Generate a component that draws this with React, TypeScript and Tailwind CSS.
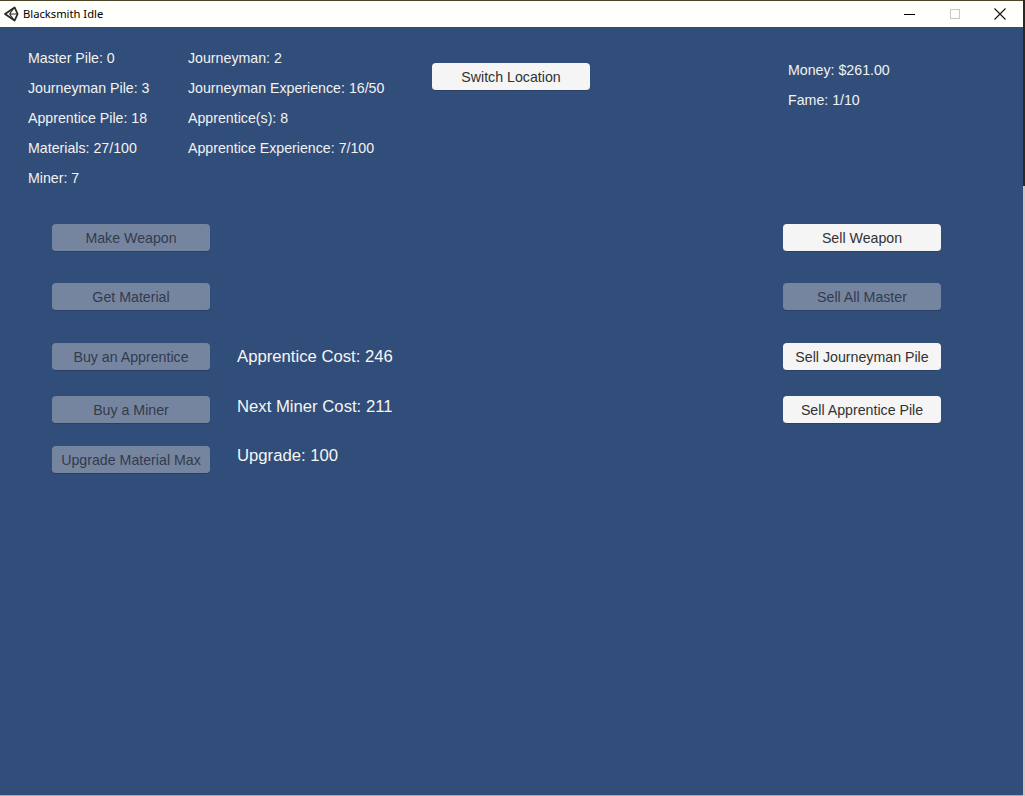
import React from "react";

function Btn({ children, off }: { children: React.ReactNode; off?: boolean }) {
  return (
    <div
      className={
        "w-[158px] h-[28px] shrink-0 flex items-center justify-center rounded-[4px] text-[14.2px] leading-[20px] pt-[1px] whitespace-nowrap border-b border-[#2a3f63] " +
        (off ? "bg-[#76859f] text-[#323b4e]" : "bg-[#f5f5f5] text-[#323232]")
      }
    >
      {children}
    </div>
  );
}

function Stat({ children }: { children: React.ReactNode }) {
  return <div className="h-[30px] flex items-center whitespace-nowrap text-[14.2px] text-[#f2f2f2]">{children}</div>;
}

function Row({ left, label, lift = "", right, gap = "" }: { left: React.ReactNode; label?: string; lift?: string; right?: React.ReactNode; gap?: string }) {
  return (
    <div className={"flex items-center " + gap}>
      {left}
      <div className={"flex-1 pl-[27px] text-[16.7px] leading-[18px] text-[#f5f5f5] whitespace-nowrap " + lift}>{label}</div>
      {right}
    </div>
  );
}

export default function App() {
  return (
    <div className="w-[1025px] h-[796px] flex overflow-hidden bg-[#314d79] font-['Liberation_Sans',Arial,sans-serif]">
      <div className="w-[1023px] h-full shrink-0 flex flex-col">
        <div className="h-[1px] shrink-0 bg-[#4a4429]" />
        <div className="h-[26px] shrink-0 bg-[#fffffb] flex items-center text-black">
          <svg width="16" height="16" viewBox="0 0 16 16" className="ml-[3px]" fill="none" stroke="#2a2a2a" strokeWidth="1.8" strokeLinejoin="round">
            <path d="M11.6 1.4 L2 8 L11.6 14.6 L14.6 8 Z" />
            <path d="M6.6 8 H14 M6.6 8 L10.6 2.4 M6.6 8 L10.6 13.6" strokeWidth="1.1" />
          </svg>
          <span className="ml-[4px] text-[11.2px] font-['Noto_Sans','Open_Sans',sans-serif] flex-1">Blacksmith Idle</span>
          <div className="w-[45px] flex justify-center">
            <div className="w-[11px] h-[1px] bg-black" />
          </div>
          <div className="w-[45px] flex justify-center">
            <div className="w-[10px] h-[10px] border border-[#c8c8c8]" />
          </div>
          <div className="w-[46px] flex justify-center">
            <svg width="12" height="12" viewBox="0 0 12 12" stroke="#111" strokeWidth="1.1">
              <path d="M0.5 0.5 L11.5 11.5 M11.5 0.5 L0.5 11.5" />
            </svg>
          </div>
        </div>

        <div className="flex-1 flex flex-col">
          <div className="h-[197px] shrink-0 flex pt-[16px]">
            <div className="w-[160px] pl-[28px] pt-[1px] shrink-0 box-content">
              <Stat>Master Pile: 0</Stat>
              <Stat>Journeyman Pile: 3</Stat>
              <Stat>Apprentice Pile: 18</Stat>
              <Stat>Materials: 27/100</Stat>
              <Stat>Miner: 7</Stat>
            </div>
            <div className="w-[244px] pt-[1px] shrink-0">
              <Stat>Journeyman: 2</Stat>
              <Stat>Journeyman Experience: 16/50</Stat>
              <Stat>Apprentice(s): 8</Stat>
              <Stat>Apprentice Experience: 7/100</Stat>
            </div>
            <div className="w-[356px] shrink-0 pt-[20px]">
              <Btn>Switch Location</Btn>
            </div>
            <div className="pt-[13px]">
              <Stat>Money: $261.00</Stat>
              <Stat>Fame: 1/10</Stat>
            </div>
          </div>

          <div className="pl-[52px] pr-[82px] flex flex-col">
            <Row gap="mb-[31px]" left={<Btn off>Make Weapon</Btn>} right={<Btn>Sell Weapon</Btn>} />
            <Row gap="mb-[32px]" left={<Btn off>Get Material</Btn>} right={<Btn off>Sell All Master</Btn>} />
            <Row gap="mb-[25px]" left={<Btn off>Buy an Apprentice</Btn>} label="Apprentice Cost: 246" right={<Btn>Sell Journeyman Pile</Btn>} />
            <Row gap="mb-[22px]" left={<Btn off>Buy a Miner</Btn>} label="Next Miner Cost: 211" lift="pb-[6px]" right={<Btn>Sell Apprentice Pile</Btn>} />
            <Row left={<Btn off>Upgrade Material Max</Btn>} label="Upgrade: 100" lift="pb-[8px]" right={<div className="w-[158px]" />} />
          </div>
        </div>
        <div className="h-[1px] shrink-0 bg-[#a9b48f]" />
      </div>
      <div className="w-[2px] h-full shrink-0 flex flex-col">
        <div className="h-[186px] bg-[#2a2a22]" />
        <div className="flex-1 bg-[#d9c6b0]" />
      </div>
    </div>
  );
}
